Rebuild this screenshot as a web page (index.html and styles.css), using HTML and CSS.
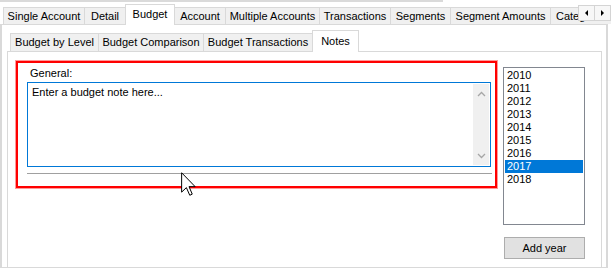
FILE: index.html
```html
<!DOCTYPE html>
<html>

<head>
    <title>Budget Notes</title>
    <meta charset="UTF-8">
    <link rel="stylesheet" href="styles.css">
</head>

<body>
    <div class="hbar"></div>
    <div class="tabctl">
        <div class="tabstrip main-strip">
            <div class="tab">Single Account</div>
            <div class="tab">Detail</div>
            <div class="tab selected">Budget</div>
            <div class="tab">Account</div>
            <div class="tab">Multiple Accounts</div>
            <div class="tab">Transactions</div>
            <div class="tab">Segments</div>
            <div class="tab">Segment Amounts</div>
            <div class="tab">Categories</div>
            <div class="tabscroll">
                <span class="scrollbtn"><span class="tri-left"></span></span>
                <span class="scrollbtn"><span class="tri-right"></span></span>
            </div>
        </div>
        <div class="page outer-page">
            <div class="tabctl inner">
                <div class="tabstrip inner-strip">
                    <div class="tab">Budget by Level</div>
                    <div class="tab">Budget Comparison</div>
                    <div class="tab">Budget Transactions</div>
                    <div class="tab selected">Notes</div>
                </div>
                <div class="page inner-page">
                    <div class="highlight">
                        <div class="field-label">General:</div>
                        <div class="note-box">
                            <div class="note-text">Enter a budget note here...</div>
                            <div class="vscroll">
                                <svg width="9" height="6" viewBox="0 0 9 6"><path d="M1 5 L4.5 1.5 L8 5" fill="none" stroke="#a6a6a6" stroke-width="1.3"/></svg>
                                <svg width="9" height="6" viewBox="0 0 9 6"><path d="M1 1 L4.5 4.5 L8 1" fill="none" stroke="#a6a6a6" stroke-width="1.3"/></svg>
                            </div>
                        </div>
                        <div class="rule"></div>
                    </div>
                    <div class="years">
                        <ul class="year-list">
                            <li>2010</li>
                            <li>2011</li>
                            <li>2012</li>
                            <li>2013</li>
                            <li>2014</li>
                            <li>2015</li>
                            <li>2016</li>
                            <li class="active">2017</li>
                            <li>2018</li>
                        </ul>
                        <button type="button">Add year</button>
                    </div>
                </div>
            </div>
        </div>
    </div>

    <!-- mouse pointer captured in the screenshot -->
    <svg class="pointer" width="15" height="24" viewBox="0 0 12 19">
        <path d="M0.5 0.5 L0.5 16 L4.3 12.4 L7 18.5 L9 17.6 L6.4 11.6 L11.3 11.6 Z" fill="#fff" stroke="#000" stroke-width="0.8" stroke-linejoin="miter"/>
    </svg>
</body>

</html>
```

FILE: styles.css
```css
* {
    box-sizing: border-box;
}

body {
    margin: 0;
    width: 611px;
    height: 268px;
    overflow: hidden;
    position: relative;
    background-color: #fff;
    font-family: "Liberation Sans", Arial, sans-serif;
    font-size: 11px;
    color: #000;
}

.hbar {
    width: 443px;
    height: 2px;
    background-color: #dadada;
}

.tabctl {
    width: 608px;
}

.tabstrip {
    position: relative;
    display: flex;
    align-items: flex-end;
    height: 22px;
    padding-left: 3px;
    white-space: nowrap;
}

.tab {
    flex-shrink: 0;
    height: 17px;
    line-height: 16px;
    text-align: center;
    margin-right: -1px;
    background-color: #f0f0f0;
    border: 1px solid #d9d9d9;
    border-bottom: none;
}

.tab.selected {
    position: relative;
    z-index: 1;
    height: 21px;
    line-height: 18px;
    margin-bottom: -1px;
    background-color: #fff;
}

/* tab widths follow the text widths of the original font */
.main-strip .tab:nth-child(1) { width: 82px; }
.main-strip .tab:nth-child(2) { width: 42px; }
.main-strip .tab:nth-child(3) { width: 50px; }
.main-strip .tab:nth-child(4) { width: 52px; }
.main-strip .tab:nth-child(5) { width: 95px; }
.main-strip .tab:nth-child(6) { width: 72px; }
.main-strip .tab:nth-child(7) { width: 61px; }
.main-strip .tab:nth-child(8) { width: 101px; }
.main-strip .tab:nth-child(9) { width: 66px; text-align: left; padding-left: 5px; }

.tabscroll {
    position: absolute;
    z-index: 2;
    left: 578px;
    top: 3px;
    display: flex;
    background-color: #fff;
}

.scrollbtn {
    display: flex;
    align-items: center;
    justify-content: center;
    width: 17px;
    height: 16px;
    margin-right: -1px;
    background-color: #f7f7f7;
    border: 1px solid #d4d4d4;
}

.tri-left,
.tri-right {
    width: 0;
    height: 0;
    border-top: 3px solid transparent;
    border-bottom: 3px solid transparent;
}

.tri-left {
    border-right: 3px solid #000;
}

.tri-right {
    border-left: 3px solid #000;
}

.page {
    border: 1px solid #d9d9d9;
    background-color: #fff;
}

.outer-page {
    height: 244px;
    border-left-width: 2px;
    border-right-width: 2px;
}

.tabctl.inner {
    width: auto;
    margin: 0 4px 0 5px;
}

.inner-strip {
    height: 26px;
}

.inner-strip .tab {
    height: 18px;
    line-height: 17px;
}

.inner-strip .tab.selected {
    height: 22px;
    line-height: 20px;
}

.inner-strip .tab:nth-child(1) { width: 89px; }
.inner-strip .tab:nth-child(2) { width: 106px; }
.inner-strip .tab:nth-child(3) { width: 110px; }
.inner-strip .tab:nth-child(4) { width: 47px; }

.inner-page {
    display: flex;
    align-items: flex-start;
    height: 217px;
    padding: 9px 0 0 8px;
}

.highlight {
    width: 481px;
    height: 127px;
    padding: 4px 0 0 9px;
    border: 2px solid #ff0000;
    box-shadow: 0 0 0 1px rgba(255, 0, 0, 0.4);
}

.field-label {
    line-height: 13px;
    padding-left: 3px;
    margin-bottom: 2px;
}

.note-box {
    display: flex;
    width: 464px;
    height: 85px;
    border: 1px solid #0078d7;
    padding: 1px 1px 1px 0;
}

.note-text {
    flex: 1;
    padding: 2px 4px;
    line-height: 13px;
}

.vscroll {
    display: flex;
    flex-direction: column;
    justify-content: space-between;
    align-items: center;
    width: 16px;
    padding: 7px 0 6px;
    background-color: #f0f0f0;
}

.vscroll svg {
    display: block;
}

.rule {
    width: 465px;
    height: 1px;
    margin-top: 6px;
    background-color: #a0a0a0;
}

.years {
    display: flex;
    flex-direction: column;
    margin: 6px 0 0 6px;
}

.year-list {
    list-style: none;
    margin: 0;
    width: 82px;
    height: 158px;
    padding: 1px;
    border: 1px solid #828790;
}

.year-list li {
    line-height: 13px;
    padding-left: 2px;
}

.year-list li.active {
    background-color: #0078d7;
    color: #fff;
}

button {
    width: 81px;
    height: 22px;
    margin: 12px 0 0 1px;
    padding: 0;
    font-family: inherit;
    font-size: inherit;
    color: #000;
    background-color: #e1e1e1;
    border: 1px solid #adadad;
}

.pointer {
    position: absolute;
    left: 181px;
    top: 172px;
}
```
